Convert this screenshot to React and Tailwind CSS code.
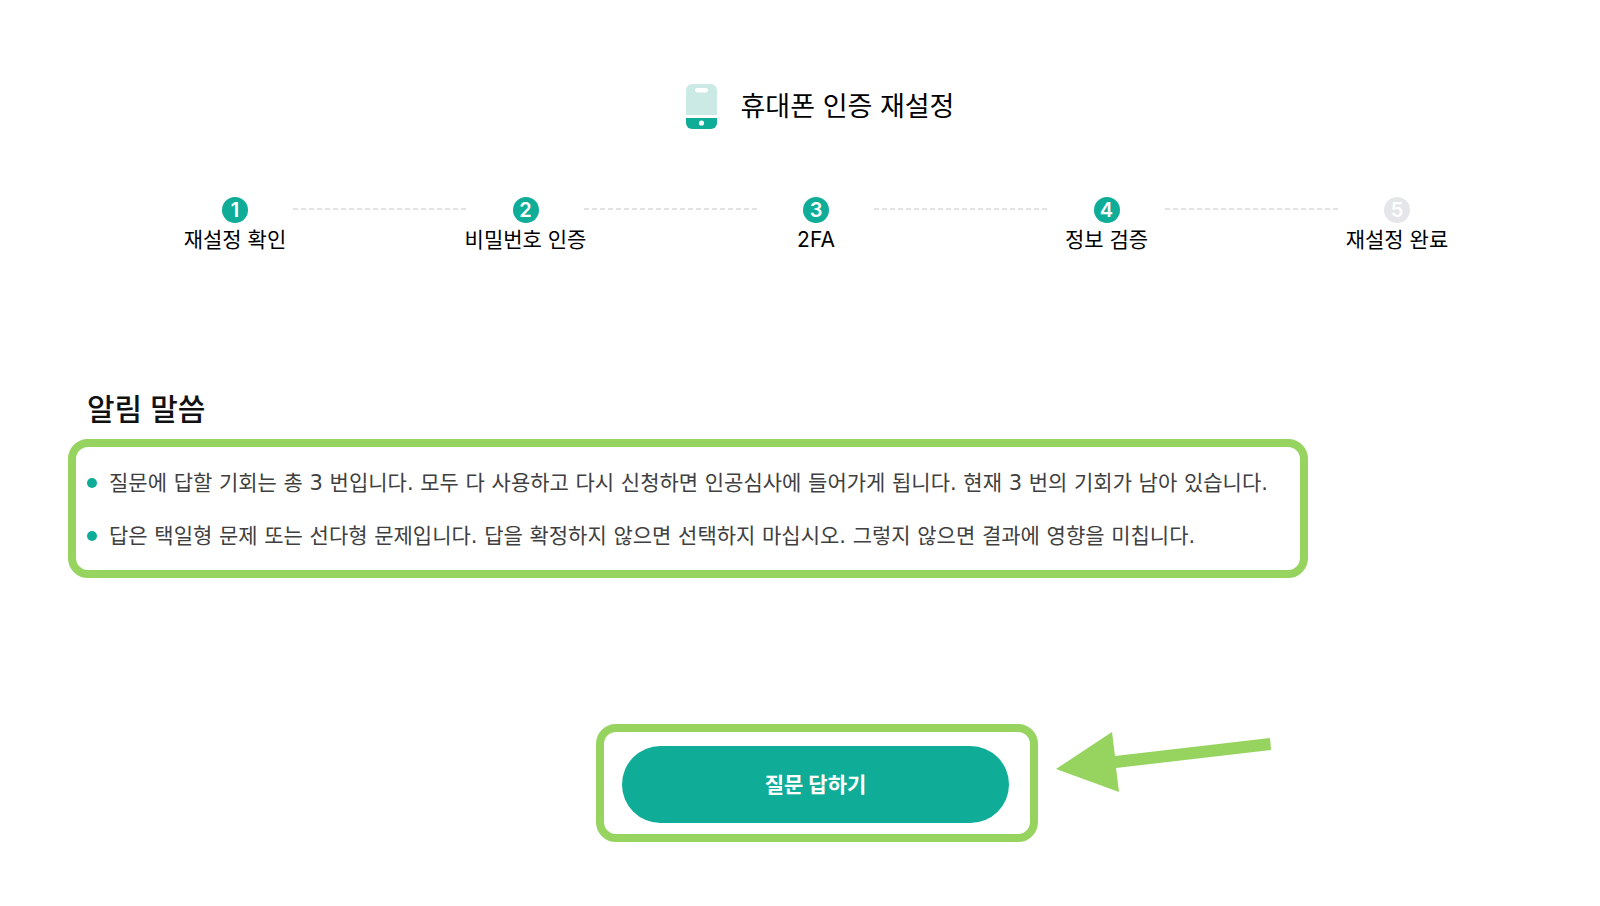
import React from 'react';

const steps = [
  { number: 1, label: '재설정 확인', done: true },
  { number: 2, label: '비밀번호 인증', done: true },
  { number: 3, label: '2FA', done: true },
  { number: 4, label: '정보 검증', done: true },
  { number: 5, label: '재설정 완료', done: false },
];

const notices = [
  '질문에 답할 기회는 총 3 번입니다. 모두 다 사용하고 다시 신청하면 인공심사에 들어가게 됩니다. 현재 3 번의 기회가 남아 있습니다.',
  '답은 택일형 문제 또는 선다형 문제입니다. 답을 확정하지 않으면 선택하지 마십시오. 그렇지 않으면 결과에 영향을 미칩니다.',
];

const PhoneIcon = () => (
  <svg width="31" height="45" viewBox="0 0 31 45" aria-hidden="true">
    <path d="M6 0h19a6 6 0 0 1 6 6v25H0V6a6 6 0 0 1 6-6z" fill="#cbeae5" />
    <rect x="9" y="4" width="13" height="4.5" rx="2.2" fill="#fff" />
    <path d="M0 34h31v5a6 6 0 0 1-6 6H6a6 6 0 0 1-6-6z" fill="#0fad98" />
    <circle cx="15.5" cy="39" r="2.6" fill="#fff" />
  </svg>
);

const DashedLine = () => (
  <svg className="mt-[11px] h-[2px] min-w-0 flex-1" aria-hidden="true">
    <line x1="0" y1="1" x2="100%" y2="1" stroke="#e3e3e3" strokeWidth="2" strokeDasharray="5 3" />
  </svg>
);

const Step = ({ number, label, done }) => (
  <li className="flex w-[116px] shrink-0 flex-col items-center">
    <span
      className={`flex h-[26px] w-[26px] items-center justify-center rounded-full text-[20px] leading-none font-semibold text-white ${done ? 'bg-[#0fad98]' : 'bg-[#e5e6ea]'}`}
    >
      {number}
    </span>
    <span className="mt-[3px] text-[21px] leading-7 whitespace-nowrap text-black">{label}</span>
  </li>
);

const Arrow = () => (
  <svg
    className="absolute top-0 left-full ml-6"
    width="220"
    height="64"
    viewBox="0 0 220 64"
    aria-hidden="true"
  >
    <path d="M2 37L58 0L61 24L216 6L217 18L62 36L65 60Z" fill="#96d45f" />
  </svg>
);

export default function App() {
  return (
    <main className="bg-white pb-16 font-['Inter','Noto_Sans_CJK_KR',sans-serif]">
      <div className="pl-8">
        <header className="flex items-center justify-center gap-6 pt-[84px] pl-2">
          <PhoneIcon />
          <h1 className="text-[27px] leading-10 text-black">휴대폰 인증 재설정</h1>
        </header>

        <ol className="mt-[68px] flex items-start px-[145px]">
          {steps.map((step, i) => (
            <React.Fragment key={step.number}>
              {i > 0 && <DashedLine />}
              <Step {...step} />
            </React.Fragment>
          ))}
        </ol>
      </div>

      <section className="mt-[135px] px-[68px]">
        <h2 className="pl-[19px] text-[30px] leading-10 font-medium text-[#111]">알림 말씀</h2>
        <div className="mt-[10px] max-w-[1240px] rounded-[20px] border-8 border-[#96d45f] pt-[22px] pb-5 pl-[11px] font-['DejaVu_Sans','Noto_Sans_CJK_KR',sans-serif]">
          <ul className="flex flex-col gap-[25px] text-[21px] leading-7 text-[#404040]">
            {notices.map((notice) => (
              <li key={notice} className="flex items-center gap-3">
                <span className="h-[10px] w-[10px] shrink-0 rounded-full bg-[#0fad98]" />
                {notice}
              </li>
            ))}
          </ul>
        </div>
      </section>

      <div className="mt-[146px] flex justify-center pl-[34px]">
        <div className="relative rounded-[20px] border-8 border-[#96d45f] pt-[14px] pr-[21px] pb-[11px] pl-[18px]">
          <button
            type="button"
            className="h-[77px] w-[387px] rounded-full bg-[#0fad98] text-[21px] font-bold text-white"
          >
            질문 답하기
          </button>
          <Arrow />
        </div>
      </div>
    </main>
  );
}
